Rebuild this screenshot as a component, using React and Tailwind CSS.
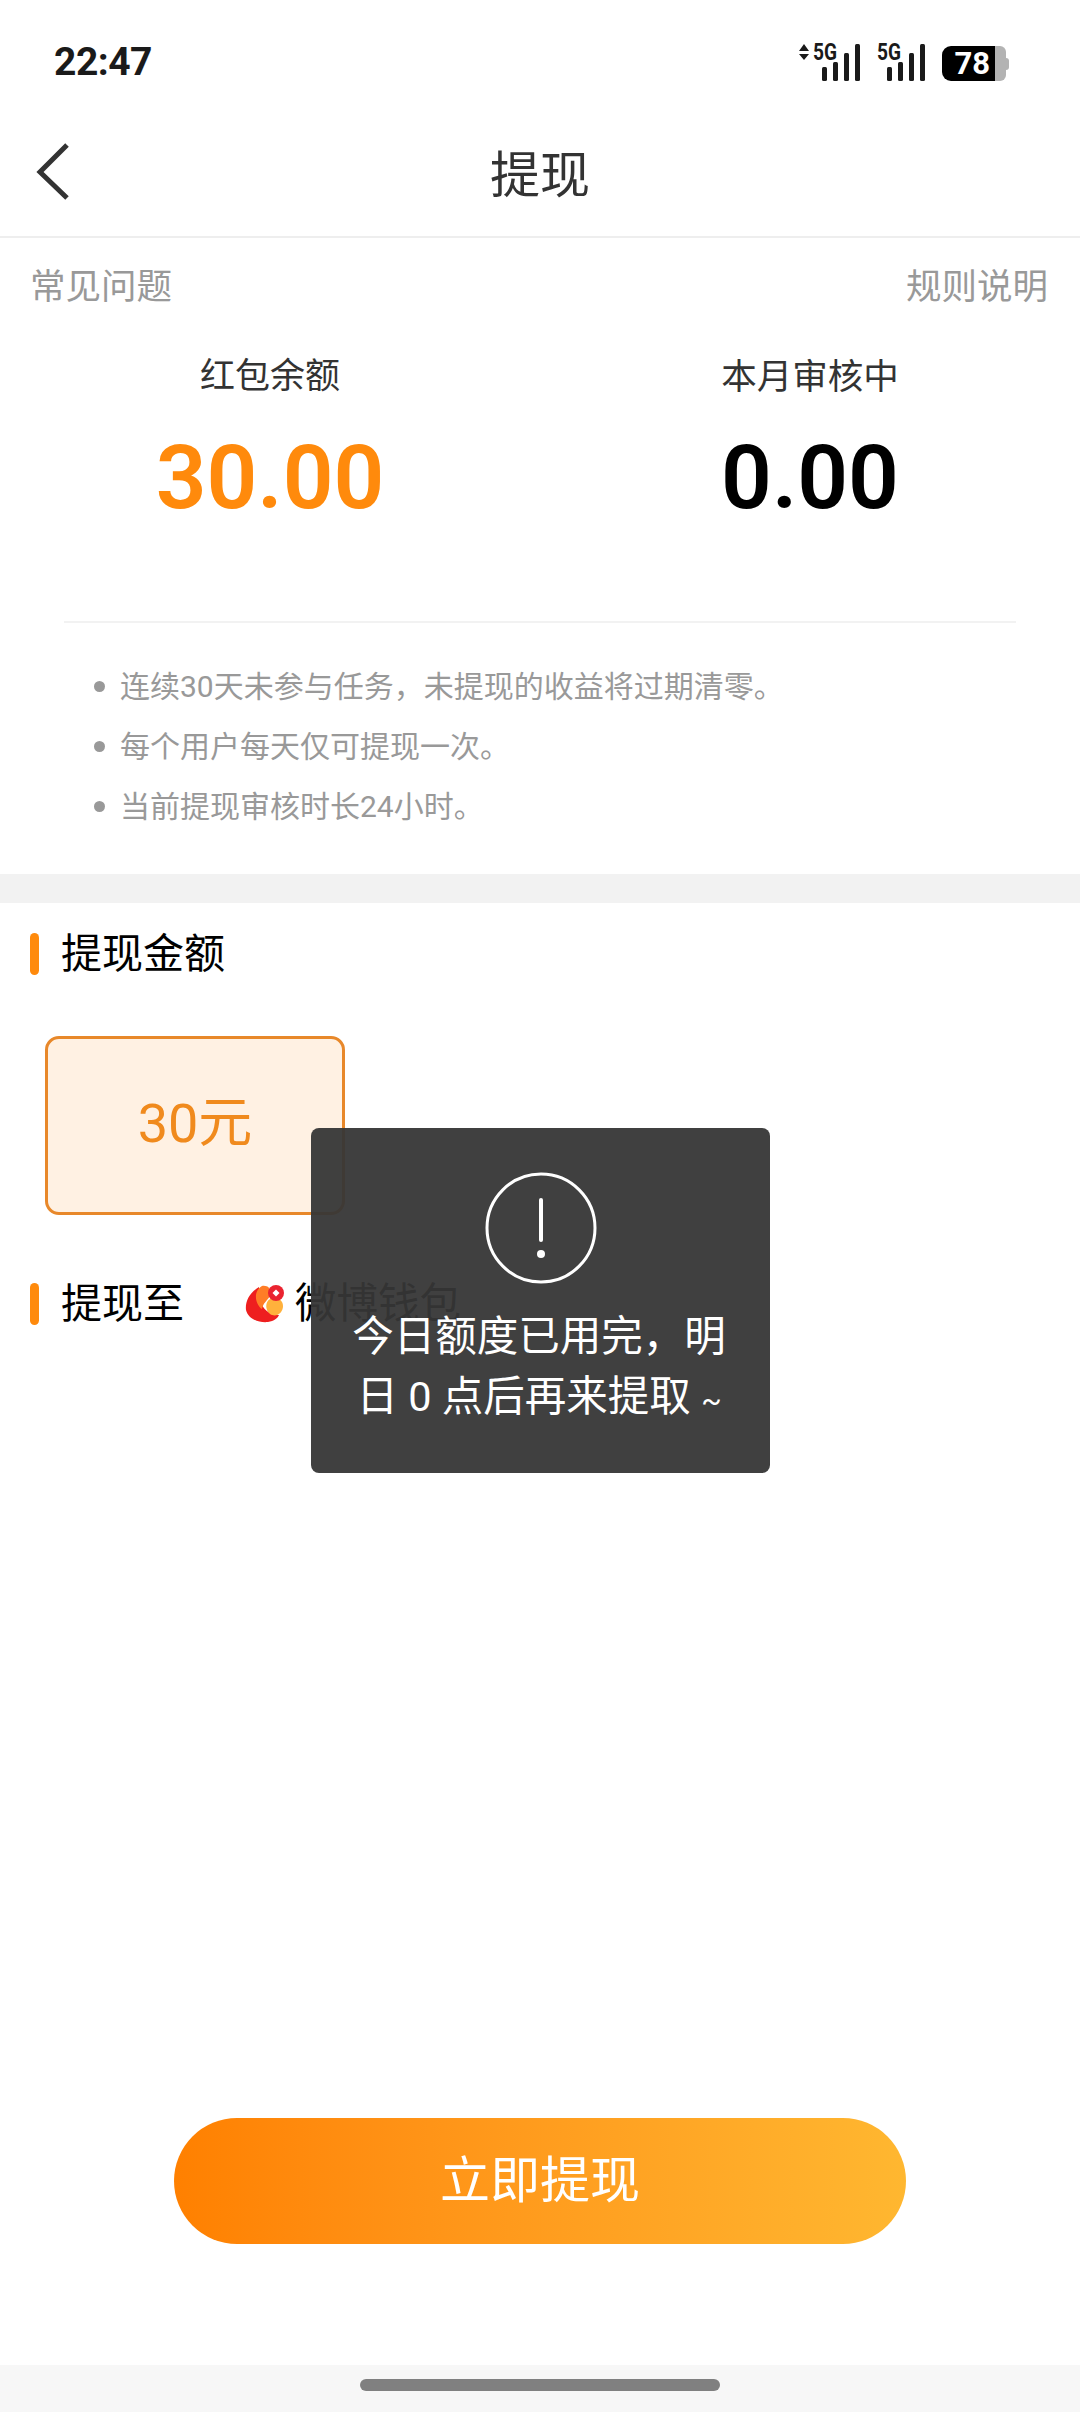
import React from "react";

const tips = [
  "连续30天未参与任务，未提现的收益将过期清零。",
  "每个用户每天仅可提现一次。",
  "当前提现审核时长24小时。",
];

function Signal({ arrows }) {
  const left = arrows ? 23 : 10;
  const xs = [left, left + 11, left + 22, left + 33];
  const tops = [30, 25, 16, 7];
  return (
    <svg width={arrows ? 61 : 48} height="48" viewBox={`0 0 ${arrows ? 61 : 48} 48`} className="block">
      {arrows && <path d="M0 14 L5 7 L10 14 Z M0 17 L5 23 L10 17 Z" fill="#1a1a1a" />}
      <text x={arrows ? 14 : 0} y="23" fontSize="23" fontWeight="700" fill="#1a1a1a" fontFamily="Roboto, sans-serif" textLength="24" lengthAdjust="spacingAndGlyphs">5G</text>
      {xs.map((x, i) => (
        <rect key={x} x={x} y={tops[i]} width="5" height={44 - tops[i]} rx="1.5" fill="#1a1a1a" />
      ))}
    </svg>
  );
}

function StatusBar() {
  return (
    <div className="h-[122px] flex items-center justify-between pl-[54px] pr-[71px] shrink-0">
      <span className="text-[39px] font-bold text-[#1a1a1a] font-['Roboto'] tracking-[-0.5px] mt-[2px]">22:47</span>
      <div className="flex items-center gap-[17px]">
        <Signal arrows />
        <Signal />
        <div className="flex items-center mt-[5px]">
          <div className="h-[35px] w-[53px] bg-black rounded-l-[9px] text-white text-[31px] font-bold leading-[35px] text-right pr-[5px] font-['Roboto']">78</div>
          <div className="h-[35px] w-[11px] bg-[#b3b3b3] rounded-r-[6px]"></div>
          <div className="h-[12px] w-[3px] bg-[#b3b3b3] rounded-r-[3px]"></div>
        </div>
      </div>
    </div>
  );
}

function SectionTitle({ children }) {
  return (
    <div className="flex items-center">
      <div className="w-[9px] h-[42px] rounded-full bg-[#ff8a0c] ml-[30px]"></div>
      <div className="ml-[22px] text-[41px] leading-[56px] text-black">{children}</div>
    </div>
  );
}

function WalletLogo() {
  return (
    <svg width="40" height="38" viewBox="0 0 40 38" className="block">
      <path d="M14 2 C4 8 0 17 1 25 C3 34 14 38 23 37 C29 36 33 33 34 30 C24 30 18 24 15 16 Z" fill="#ee1f1f" />
      <path d="M17 1 C24 0 27 5 25 11 C22 16 18 18 17 24 C11 20 7 7 17 1 Z" fill="#ff7d26" />
      <path d="M25 14 C32 11 38 15 38 21 C38 28 31 33 25 29 C20 25 20 17 25 14 Z" fill="#ffb13c" />
      <circle cx="31" cy="8" r="8" fill="#ea2330" />
      <path d="M31 4.5 L34.5 8 L31 11.5 L27.5 8 Z" fill="#fff" />
    </svg>
  );
}

export default function App() {
  return (
    <div lang="zh-CN" className="relative w-[1080px] h-[2412px] bg-white flex flex-col font-['Roboto','Noto_Sans_CJK_SC',sans-serif] overflow-hidden">
      <StatusBar />

      <div className="relative h-[116px] border-b-2 border-[#eeeeee] flex items-center justify-center pb-[6px] shrink-0">
        <svg width="36" height="60" viewBox="0 0 36 60" className="absolute left-[35px] top-[20px]">
          <path d="M32 3 L5 30 L32 56" fill="none" stroke="#333" strokeWidth="5" />
        </svg>
        <h1 className="text-[50px] leading-[60px] text-[#333]">提现</h1>
      </div>

      <div className="flex justify-between pl-[30px] pr-[32px] pt-[25px] text-[35.5px] leading-[48px] text-[#999]">
        <span>常见问题</span>
        <span>规则说明</span>
      </div>

      <div className="flex pt-[42px] shrink-0">
        <div className="w-[540px] flex flex-col items-center">
          <div className="text-[35px] leading-[48px] text-[#333]">红包余额</div>
          <div className="text-[89px] leading-[112px] mt-[21px] -mb-[1px] font-semibold text-[#ff8a0c]">30.00</div>
        </div>
        <div className="w-[540px] flex flex-col items-center">
          <div className="text-[35.5px] leading-[48px] text-[#333]">本月审核中</div>
          <div className="text-[89px] leading-[112px] mt-[21px] -mb-[1px] font-semibold text-black">0.00</div>
        </div>
      </div>

      <div className="mx-[64px] mt-[88px] h-[2px] bg-[#f2f2f2] shrink-0"></div>

      <ul className="pl-[94px] pt-[33px] shrink-0">
        {tips.map((t) => (
          <li key={t} className="flex items-center h-[60px] text-[30px] text-[#999]">
            <span className="w-[11px] h-[11px] rounded-full bg-[#999] mr-[15px]"></span>
            {t}
          </li>
        ))}
      </ul>

      <div className="h-[29px] bg-[#f2f2f2] shrink-0 mt-[38px]"></div>

      <div className="pt-[23px]">
        <SectionTitle>提现金额</SectionTitle>
      </div>

      <div className="ml-[45px] mt-[54px] w-[300px] h-[179px] rounded-[14px] border-[3px] border-[#e8882a] bg-[#fff1e3] flex items-center justify-center text-[54px] text-[#f08a1d] pb-[5px] shrink-0">
        30元
      </div>

      <div className="flex items-center mt-[61px]">
        <SectionTitle>提现至</SectionTitle>
        <div className="ml-[61px]"><WalletLogo /></div>
        <span className="ml-[10px] text-[41.5px] leading-[56px] text-black">微博钱包</span>
      </div>

      <div className="flex-1"></div>

      <button className="mx-auto w-[732px] h-[126px] rounded-full bg-gradient-to-r from-[#ff8000] to-[#ffb730] text-white text-[50px] mb-[121px] shrink-0">
        立即提现
      </button>

      <div className="h-[47px] bg-[#f7f7f7] flex justify-center pt-[14px] shrink-0">
        <div className="w-[360px] h-[12px] rounded-full bg-[#808080]"></div>
      </div>

      {/* toast over the page */}
      <div className="absolute left-[311px] top-[1128px] w-[459px] h-[345px] rounded-[8px] bg-[#363636]/95 flex flex-col items-center pt-[44px]">
        <svg width="112" height="112" viewBox="0 0 112 112">
          <circle cx="56" cy="56" r="54" fill="none" stroke="#fff" strokeWidth="3" />
          <path d="M56 28 V68" stroke="#fff" strokeWidth="4" strokeLinecap="round" />
          <circle cx="56" cy="82" r="4" fill="#fff" />
        </svg>
        <p className="w-[380px] mr-[3px] mt-[23px] text-[41.5px] leading-[60px] text-white text-center">
          今日额度已用完，明日 0 点后再来提取 <span className="text-[30px]">~</span>
        </p>
      </div>
    </div>
  );
}
